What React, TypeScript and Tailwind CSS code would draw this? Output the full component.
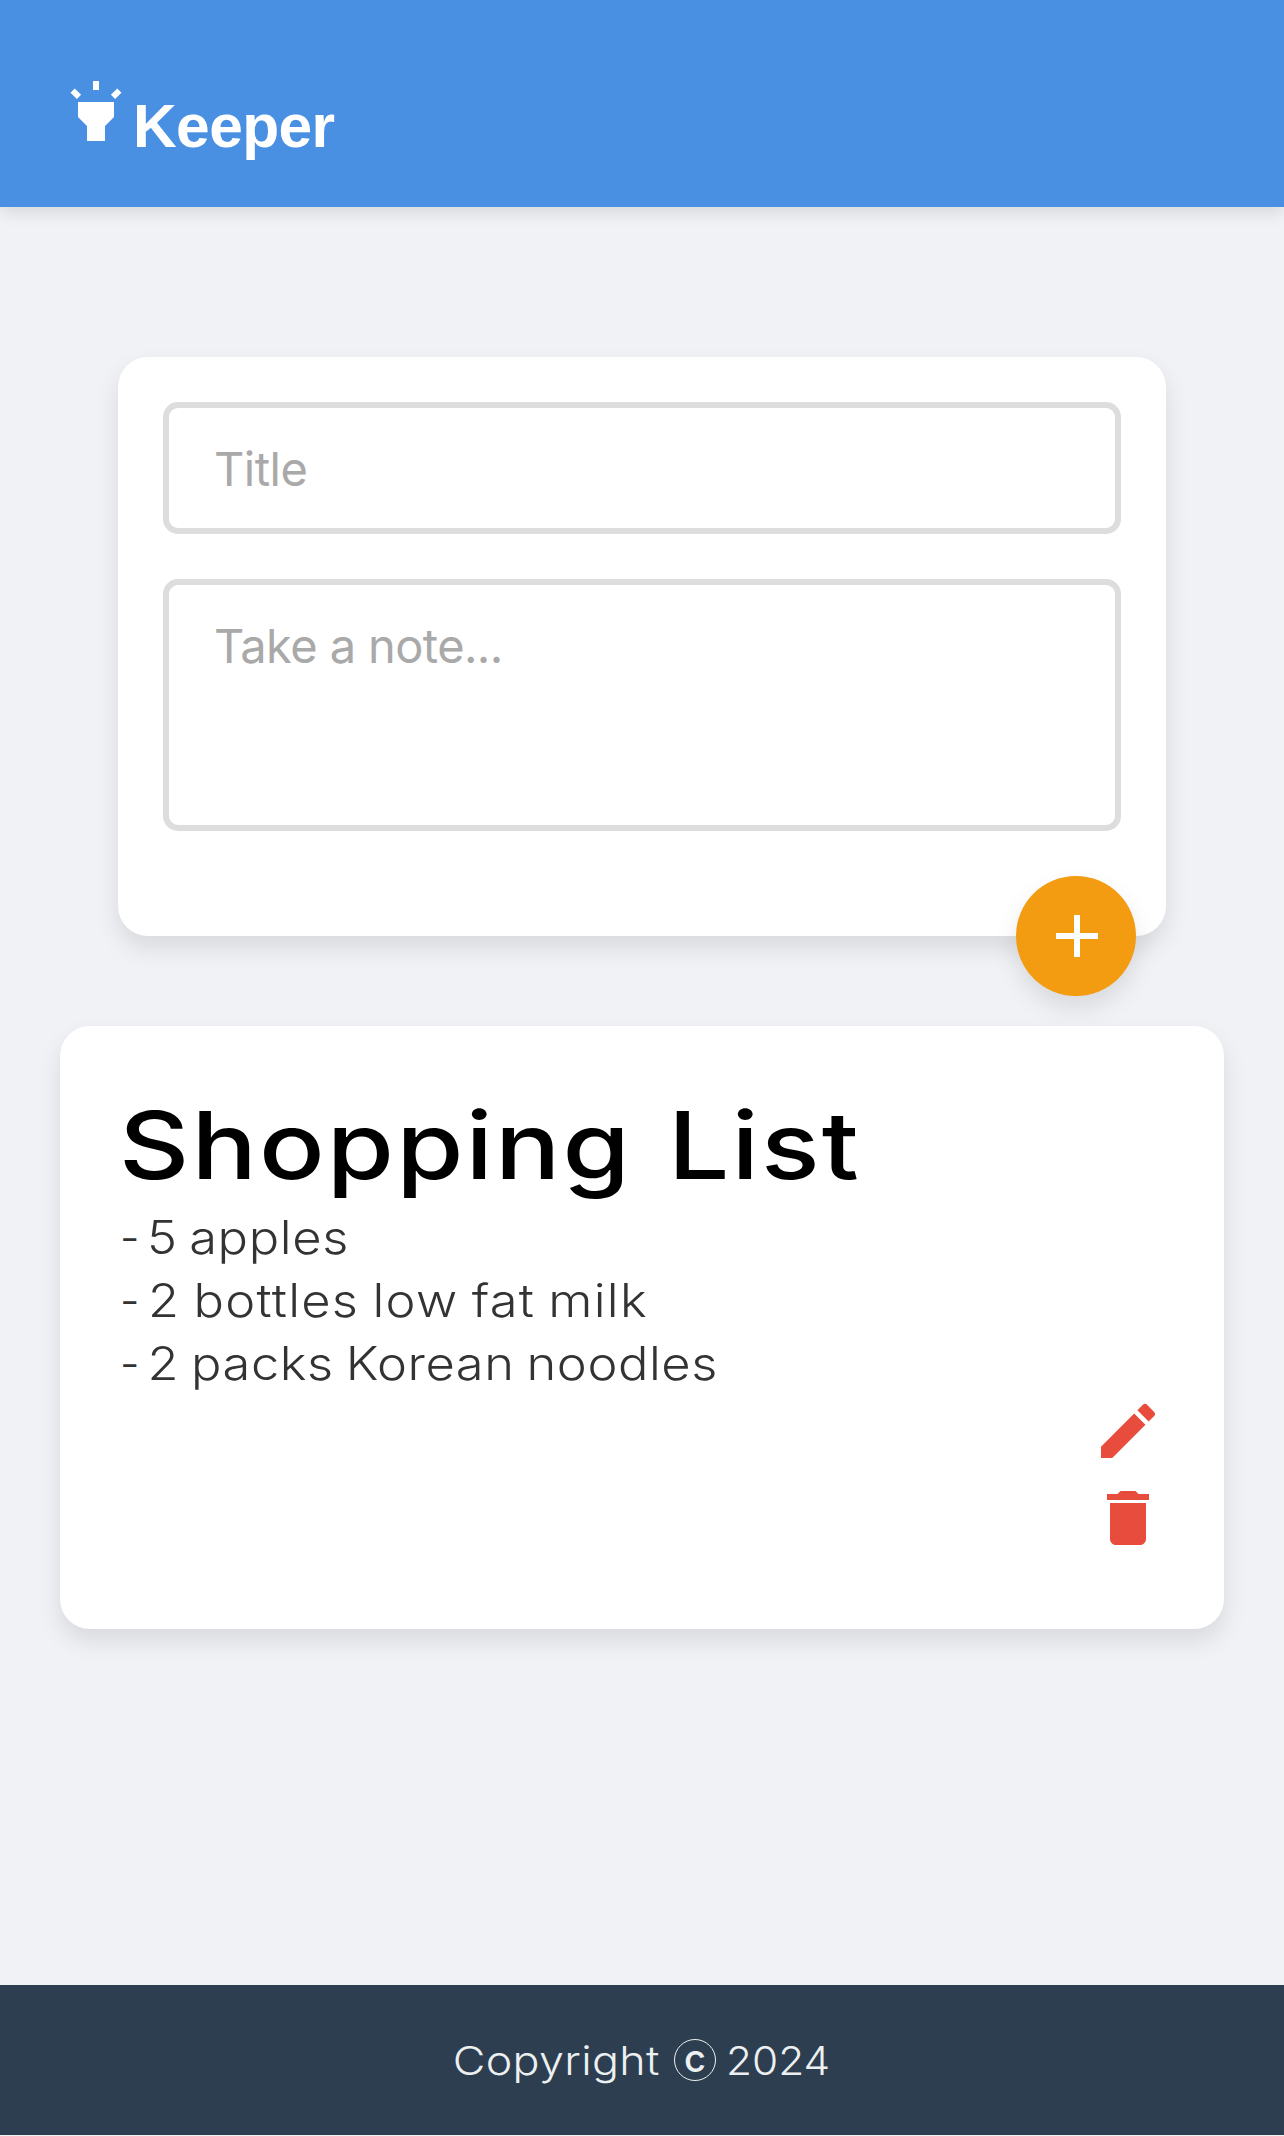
import React from "react";

const noteLines = [
  { text: "5 apples", spacing: "tracking-[0.6px] [word-spacing:-3px]" },
  { text: "2 bottles low fat milk", spacing: "tracking-[1.15px] [word-spacing:-2px]" },
  { text: "2 packs Korean noodles", spacing: "tracking-[0.5px] [word-spacing:-2.5px]" },
];

function Icon({ d, className }: { d: string; className: string }) {
  return (
    <svg viewBox="0 0 24 24" fill="currentColor" className={className} aria-hidden="true">
      <path d={d} />
    </svg>
  );
}

const HIGHLIGHT =
  "m6 14 3 3v5h6v-5l3-3V9H6zM11 2h2v3h-2zM3.5 5.88l1.41-1.41 2.12 2.12L5.62 8zm13.46.71 2.12-2.12 1.41 1.41L18.38 8z";
const ADD = "M19 13h-6v6h-2v-6H5v-2h6V5h2v6h6z";
const EDIT =
  "M3 17.25V21h3.75L17.81 9.94l-3.75-3.75zM20.71 7.04c.39-.39.39-1.02 0-1.41l-2.34-2.34a.996.996 0 0 0-1.41 0l-1.83 1.83 3.75 3.75z";
const DELETE = "M6 19c0 1.1.9 2 2 2h8c1.1 0 2-.9 2-2V7H6zM19 4h-3.5l-1-1h-5l-1 1H5v2h14z";

function Header() {
  return (
    <header className="flex h-[207px] items-start bg-[#4a90e2] pl-[60px] shadow-[0_6px_15px_rgba(0,0,0,0.1)]">
      <Icon d={HIGHLIGHT} className="mt-[75px] size-[72px] text-white" />
      <h1 className="mt-24 ml-px font-['Liberation_Sans',sans-serif] text-[60.5px] leading-[60px] font-bold tracking-[-0.6px] text-white">
        Keeper
      </h1>
    </header>
  );
}

function CreateArea() {
  return (
    <form className="relative mx-[118px] mt-[150px] flex h-[579px] flex-col gap-[45px] rounded-[30px] bg-white p-[45px] shadow-[0_12px_24px_rgba(0,0,0,0.1)]">
      <input
        placeholder="Title"
        className="h-[132px] w-full rounded-[15px] border-[6px] border-[#ddd] pl-[45px] font-[Inter,sans-serif] text-[47px] tracking-[-0.5px] placeholder:text-[#a9a9a9]"
      />
      <textarea
        placeholder="Take a note..."
        className="h-[252px] w-full resize-none rounded-[15px] border-[6px] border-[#ddd] pt-[31px] pl-[45px] font-[Inter,sans-serif] text-[47px] leading-[60px] tracking-[-0.6px] placeholder:text-[#a9a9a9]"
      />
      <button
        type="button"
        aria-label="Add note"
        className="absolute right-[30px] -bottom-[60px] size-[120px] rounded-full bg-[#f39c12] pl-[25px] text-white shadow-[0_12px_24px_rgba(0,0,0,0.1)]"
      >
        <Icon d={ADD} className="size-[72px]" />
      </button>
    </form>
  );
}

function Note() {
  return (
    <article className="mx-[60px] mt-[90px] flex h-[603px] flex-col rounded-[30px] bg-white px-[60px] pt-[69px] shadow-[0_12px_24px_rgba(0,0,0,0.1)]">
      <h2 className="-ml-px origin-left scale-x-[1.17] font-[Inter,sans-serif] text-[93px] leading-[100px] font-medium tracking-[1.8px] [word-spacing:4px] whitespace-nowrap text-black">
        Shopping List
      </h2>
      <div className="mt-[11px] origin-left scale-x-[1.1] font-[Inter,sans-serif] text-[46px] leading-[63px] font-light text-[#333]">
        {noteLines.map((line) => (
          <p key={line.text} className={line.spacing}>
            <span className="inline-block w-[20px]">
              <span className="inline-block origin-left scale-x-[0.85]">-</span>
            </span>
            <span className="tracking-[-5.5px]"> </span>
            {line.text}
          </p>
        ))}
      </div>
      <div className="flex flex-col items-end gap-[15px] text-[#e74c3c]">
        <Icon d={EDIT} className="size-[72px]" />
        <Icon d={DELETE} className="size-[72px]" />
      </div>
    </article>
  );
}

function Footer() {
  return (
    <footer className="mt-auto mb-px flex h-[150px] items-center justify-center bg-[#2c3e50] font-[Inter,sans-serif] text-[40px] leading-[60px] font-light text-[#ecf0f1]">
      <p className="flex items-center">
        <span className="w-[207px] origin-left scale-x-[1.12] pt-[2px] tracking-[0.3px]">
          <span className="-ml-[2px]">Copyright</span>
        </span>
        <span className="ml-[12px] flex size-[42px] items-center justify-center rounded-full border-[1.5px] border-[#ecf0f1] pb-[5px] text-[38px] leading-[38px] font-medium">
          c
        </span>
        <span className="ml-[10px] w-[103px] origin-left scale-x-[1.06] pt-[2px]">2024</span>
      </p>
    </footer>
  );
}

export default function App() {
  return (
    <div className="flex h-[2136px] w-full flex-col bg-[#f0f2f6]">
      <Header />
      <CreateArea />
      <Note />
      <Footer />
    </div>
  );
}
